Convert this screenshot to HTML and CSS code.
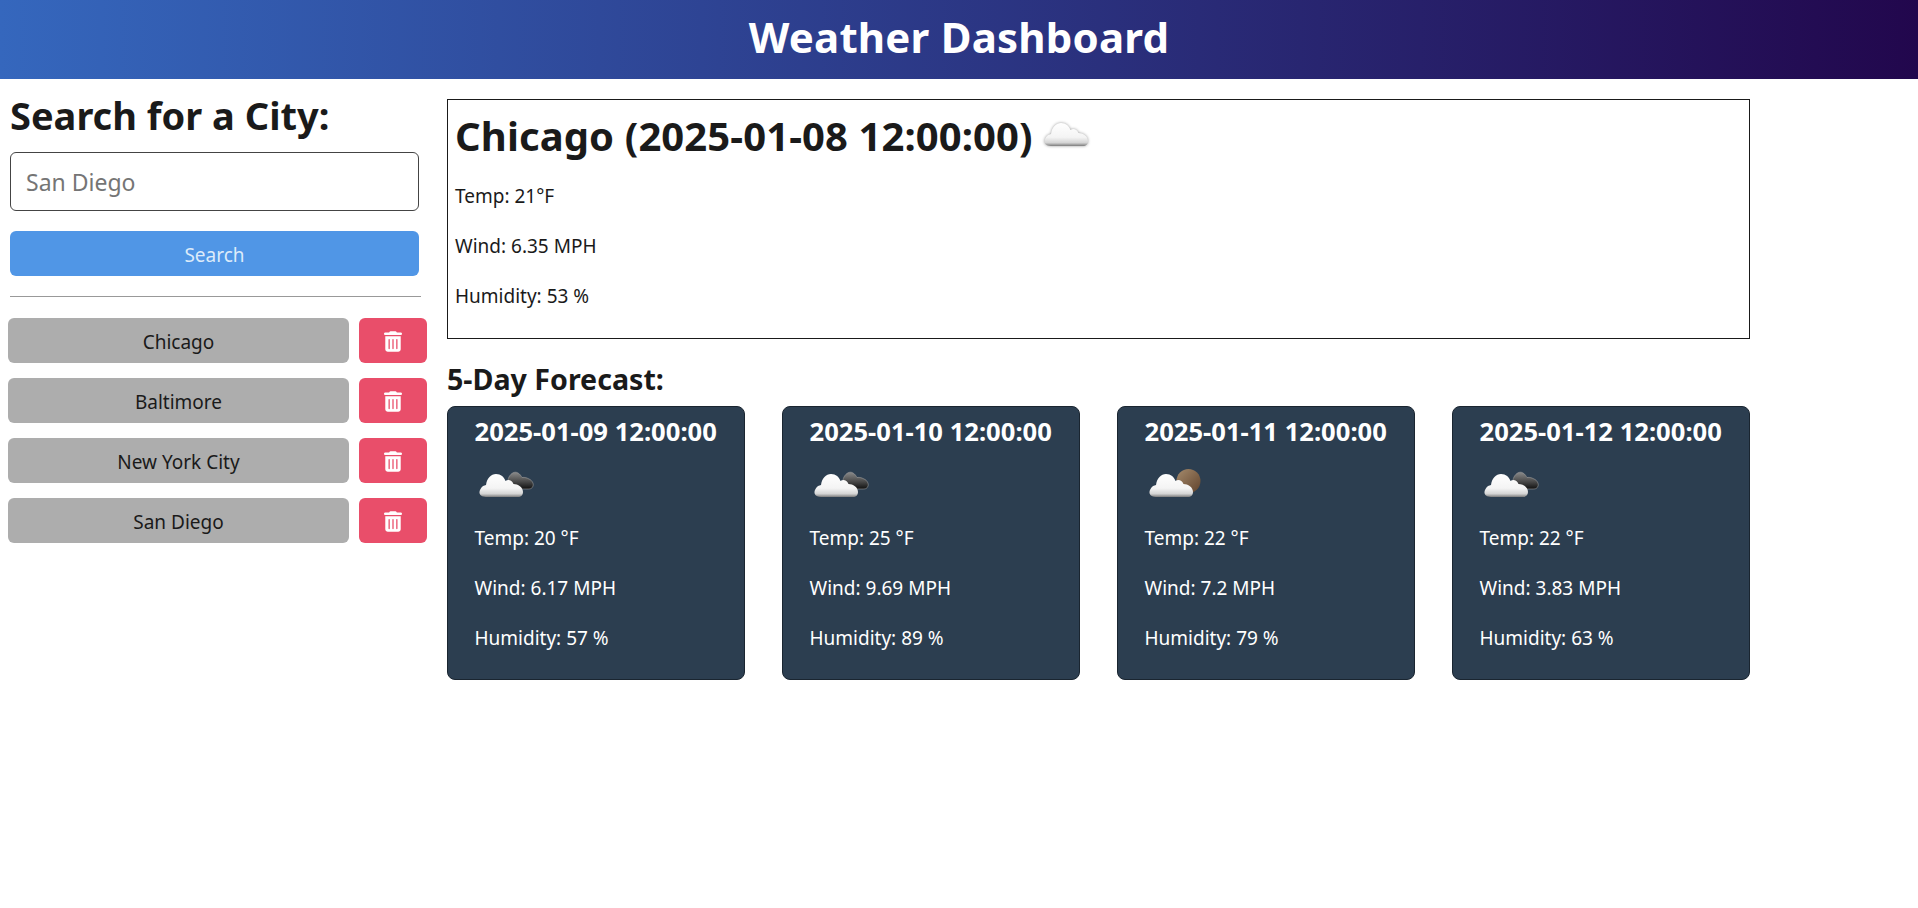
FILE: index.html
```html
<!DOCTYPE html>
<html lang="en">

<head>
    <meta charset="UTF-8">
    <meta name="viewport" content="width=device-width, initial-scale=1.0">
    <link rel="stylesheet" href="styles.css">
    <title>Weather Dashboard</title>
</head>

<body>
    <svg class="icon-defs" aria-hidden="true">
        <defs>
            <linearGradient id="cloudFill" x1="0" y1="0" x2="0" y2="1">
                <stop offset="0" stop-color="#ffffff" />
                <stop offset="0.62" stop-color="#f4f4f4" />
                <stop offset="0.86" stop-color="#d4d4d4" />
                <stop offset="1" stop-color="#7c7c7c" />
            </linearGradient>
            <linearGradient id="darkFill" x1="0" y1="0" x2="0" y2="1">
                <stop offset="0" stop-color="#8a8a8a" />
                <stop offset="0.55" stop-color="#4a4a4a" />
                <stop offset="1" stop-color="#111111" />
            </linearGradient>
            <linearGradient id="sunFill" x1="0" y1="0" x2="1" y2="1">
                <stop offset="0" stop-color="#a58a6c" />
                <stop offset="1" stop-color="#60432c" />
            </linearGradient>
            <symbol id="cloud" viewBox="0 0 60 40">
                <path fill="url(#cloudFill)" d="M11 32C5 32 3 28 5.500 24C7 21 9 20.500 11 20C12 13 16 9 21 9C26 9 29 12 30.500 16C33 14 37 15 38.500 19C43 19 48 22 48 27C48 30 46 32 43 32Z" />
            </symbol>
            <symbol id="cloudDark" viewBox="0 0 60 40">
                <path fill="url(#darkFill)" stroke="#9a9a9a" stroke-width="0.6" d="M36 24C33 21 32 16 34 12C36 8 40 6 43 8C45 9 46 11 47 12.500C50 12 52 13 54 14C57 15 59 19 58 21C57 24 55 24 52 24Z" />
                <use href="#cloud" width="60" height="40" />
            </symbol>
            <symbol id="cloudSun" viewBox="0 0 60 40">
                <circle cx="43.500" cy="16" r="12" fill="url(#sunFill)" />
                <use href="#cloud" width="60" height="40" />
            </symbol>
            <symbol id="trash" viewBox="0 0 448 512">
                <path fill="currentColor" d="M135.200 17.700C140.600 6.800 151.700 0 163.800 0H284.200c12.100 0 23.200 6.800 28.600 17.700L320 32h96c17.700 0 32 14.300 32 32s-14.300 32-32 32H32C14.300 96 0 81.700 0 64S14.300 32 32 32h96l7.200-14.300zM32 128H416V448c0 35.300-28.700 64-64 64H96c-35.300 0-64-28.700-64-64V128zm96 64c-8.800 0-16 7.200-16 16V432c0 8.800 7.200 16 16 16s16-7.200 16-16V208c0-8.800-7.200-16-16-16zm96 0c-8.800 0-16 7.200-16 16V432c0 8.800 7.200 16 16 16s16-7.200 16-16V208c0-8.800-7.200-16-16-16zm96 0c-8.800 0-16 7.200-16 16V432c0 8.800 7.200 16 16 16s16-7.200 16-16V208c0-8.800-7.200-16-16-16z" />
            </symbol>
        </defs>
    </svg>

    <header class="top-bar">
        <h1>Weather Dashboard</h1>
    </header>

    <div class="layout">
        <aside class="sidebar">
            <form class="search-form">
                <h2>Search for a City:</h2>
                <input class="city-input" type="text" placeholder="San Diego">
                <button class="search-btn" type="button">Search</button>
            </form>
            <hr class="divider">
            <div class="history">
                <div class="history-row">
                    <button class="city-btn" type="button">Chicago</button>
                    <button class="delete-btn" type="button" aria-label="Delete Chicago"><svg class="trash-icon"><use href="#trash" /></svg></button>
                </div>
                <div class="history-row">
                    <button class="city-btn" type="button">Baltimore</button>
                    <button class="delete-btn" type="button" aria-label="Delete Baltimore"><svg class="trash-icon"><use href="#trash" /></svg></button>
                </div>
                <div class="history-row">
                    <button class="city-btn" type="button">New York City</button>
                    <button class="delete-btn" type="button" aria-label="Delete New York City"><svg class="trash-icon"><use href="#trash" /></svg></button>
                </div>
                <div class="history-row">
                    <button class="city-btn" type="button">San Diego</button>
                    <button class="delete-btn" type="button" aria-label="Delete San Diego"><svg class="trash-icon"><use href="#trash" /></svg></button>
                </div>
            </div>
        </aside>

        <main class="weather">
            <section class="today">
                <h2 class="today-title">Chicago (2025-01-08 12:00:00) <svg class="today-icon"><use href="#cloud" /></svg></h2>
                <p>Temp: 21°F</p>
                <p>Wind: 6.35 MPH</p>
                <p>Humidity: 53 %</p>
            </section>

            <h3 class="forecast-title">5-Day Forecast:</h3>
            <section class="forecast">
                <article class="card">
                    <h4>2025-01-09 12:00:00</h4>
                    <svg class="card-icon"><use href="#cloudDark" /></svg>
                    <p>Temp: 20 °F</p>
                    <p>Wind: 6.17 MPH</p>
                    <p>Humidity: 57 %</p>
                </article>
                <article class="card">
                    <h4>2025-01-10 12:00:00</h4>
                    <svg class="card-icon"><use href="#cloudDark" /></svg>
                    <p>Temp: 25 °F</p>
                    <p>Wind: 9.69 MPH</p>
                    <p>Humidity: 89 %</p>
                </article>
                <article class="card">
                    <h4>2025-01-11 12:00:00</h4>
                    <svg class="card-icon"><use href="#cloudSun" /></svg>
                    <p>Temp: 22 °F</p>
                    <p>Wind: 7.2 MPH</p>
                    <p>Humidity: 79 %</p>
                </article>
                <article class="card">
                    <h4>2025-01-12 12:00:00</h4>
                    <svg class="card-icon"><use href="#cloudDark" /></svg>
                    <p>Temp: 22 °F</p>
                    <p>Wind: 3.83 MPH</p>
                    <p>Humidity: 63 %</p>
                </article>
            </section>
        </main>
    </div>
</body>

</html>
```

FILE: styles.css
```css
* {
    box-sizing: border-box;
}

body {
    margin: 0;
    font-family: "Noto Sans", "Open Sans", Arial, sans-serif;
    color: #1a1a1a;
    background-color: #fff;
}

.icon-defs {
    position: absolute;
    width: 0;
    height: 0;
}

.top-bar {
    display: flex;
    justify-content: center;
    align-items: center;
    height: 79px;
    padding-bottom: 6px;
    color: #fff;
    background: linear-gradient(to right, #3567bd, #22074d);
}

h1 {
    margin: 0;
    font-size: 42px;
    font-weight: 700;
    letter-spacing: 0.2px;
}

.layout {
    display: grid;
    grid-template-columns: 447px 1303px;
}

.sidebar {
    padding-top: 12px;
}

.search-form {
    display: flex;
    flex-direction: column;
    padding-left: 10px;
    width: 419px;
}

.search-form h2 {
    margin: 0 0 12px;
    font-size: 38px;
    line-height: 49px;
    font-weight: 700;
}

.city-input {
    height: 59px;
    padding: 0 15px;
    margin-bottom: 20px;
    font-family: inherit;
    font-size: 23px;
    border: 1px solid #444;
    border-radius: 6px;
}

.city-input::placeholder {
    color: #757575;
}

.search-btn {
    height: 45px;
    padding-top: 3px;
    font-family: inherit;
    font-size: 19px;
    color: #dcebfa;
    background-color: #5096e6;
    border: none;
    border-radius: 6px;
}

.divider {
    width: 411px;
    margin: 20px 0 21px 10px;
    border: none;
    border-top: 1px solid #999;
}

.history {
    display: flex;
    flex-direction: column;
    gap: 15px;
    padding-left: 8px;
}

.history-row {
    display: flex;
    gap: 10px;
}

.city-btn {
    width: 341px;
    height: 45px;
    padding-top: 4px;
    font-family: inherit;
    font-size: 19px;
    color: #1a1a1a;
    background-color: #adadad;
    border: none;
    border-radius: 6px;
}

.delete-btn {
    display: flex;
    justify-content: center;
    align-items: center;
    width: 68px;
    height: 45px;
    padding: 1px 0 0;
    color: #fff;
    background-color: #e94e6a;
    border: none;
    border-radius: 6px;
}

.trash-icon {
    width: 18px;
    height: 21px;
}

.weather {
    padding-top: 20px;
}

.weather p {
    margin: 0 0 26px;
    font-size: 19px;
    line-height: 24px;
}

.today {
    height: 240px;
    padding: 5px 7px 0;
    border: 1px solid #1a1a1a;
}

.today-title {
    display: flex;
    align-items: center;
    height: 60px;
    margin: 0 0 19px;
    font-size: 40px;
    font-weight: 700;
    letter-spacing: 0.1px;
    white-space: pre;
}

.today-icon {
    width: 60px;
    height: 40px;
    margin: -2px 0 0 -3px;
    filter: drop-shadow(0 0 1.5px rgba(0, 0, 0, 0.4));
}

.forecast-title {
    margin: 22px 0 9px;
    font-size: 28.6px;
    line-height: 36px;
    font-weight: 700;
}

.forecast {
    display: flex;
    justify-content: space-between;
}

.card {
    width: 298px;
    height: 274px;
    padding: 9px 26.5px 0;
    color: #fff;
    background-color: #2c3e50;
    border: 1px solid #1a2530;
    border-radius: 8px;
}

.card h4 {
    margin: 0 0 17px;
    font-size: 25.6px;
    line-height: 32px;
    font-weight: 700;
}

.card-icon {
    display: block;
    width: 60px;
    height: 40px;
    margin-bottom: 21px;
}
```
